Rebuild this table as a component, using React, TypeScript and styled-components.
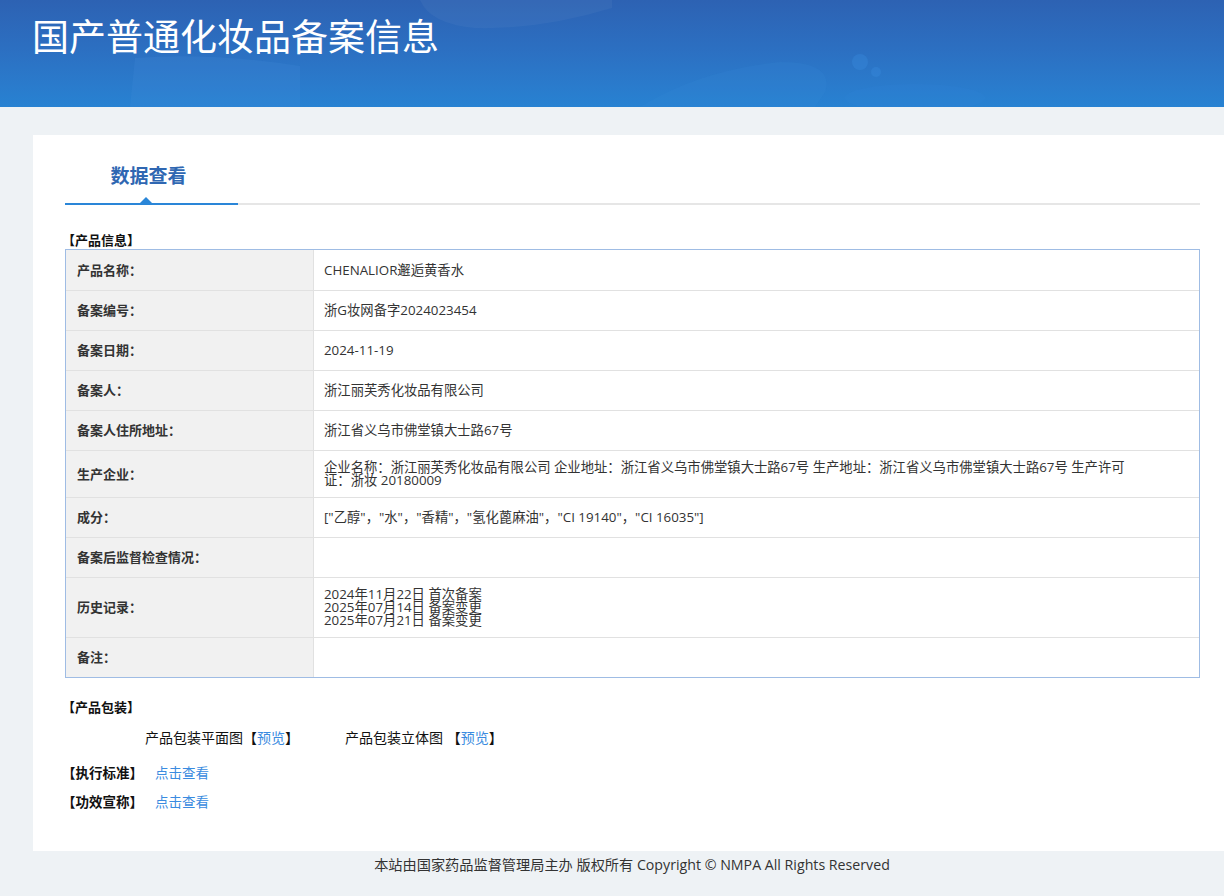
import React from "react";
import styled, { createGlobalStyle } from "styled-components";

const GlobalStyle = createGlobalStyle`
  html, body {
    margin: 0;
    padding: 0;
    background: #eef2f5;
    font-family: "Open Sans", "Noto Sans CJK SC", sans-serif;
    color: #333;
  }
  * { box-sizing: border-box; }
`;

const Header = styled.header`
  position: relative;
  height: 107px;
  overflow: hidden;
  background: linear-gradient(180deg, #2d62b3 0%, #2c6fc1 45%, #2a7bcc 80%, #2782d2 100%);
`;

const HeaderArt = styled.svg`
  position: absolute;
  inset: 0;
  width: 100%;
  height: 100%;
  pointer-events: none;
`;

const Title = styled.h1`
  position: relative;
  margin: 0;
  padding: 13px 0 0 32px;
  font-family: "Noto Sans CJK SC", sans-serif;
  font-size: 37px;
  line-height: 44px;
  font-weight: 400;
  color: #ffffff;
`;

const Main = styled.main`
  padding: 28px 0 0 33px;
`;

const Panel = styled.section`
  background: #ffffff;
  min-height: 716px;
  padding: 0 24px 30px 32px;
`;

const TabBar = styled.div`
  display: flex;
  border-bottom: 2px solid #e6e6e6;
`;

const Tab = styled.div`
  position: relative;
  width: 173px;
  height: 70px;
  padding: 27px 6px 0 0;
  text-align: center;
  font-family: "Noto Sans CJK SC", sans-serif;
  font-size: 19px;
  line-height: 26px;
  font-weight: 700;
  color: #2f67b2;
  border-bottom: 2px solid #2a86d8;
  margin-bottom: -2px;
  &::after {
    content: "";
    position: absolute;
    left: 75px;
    bottom: 0;
    border-left: 6px solid transparent;
    border-right: 6px solid transparent;
    border-bottom: 6px solid #2a86d8;
  }
`;

const SectionTitle = styled.div<{ $top?: number }>`
  margin-top: ${(p) => p.$top ?? 0}px;
  font-size: 13px;
  line-height: 16px;
  font-weight: 700;
  color: #111;
  margin-left: -3px;
`;

const InfoTable = styled.div`
  margin-top: 1px;
  border: 1px solid #9fbce4;
`;

const Row = styled.div`
  display: grid;
  grid-template-columns: 248px 1fr;
  border-bottom: 1px solid #e1e1e1;
  &:first-child > div {
    min-height: 40px;
  }
  &:last-child {
    border-bottom: none;
  }
`;

const LabelCell = styled.div`
  display: flex;
  align-items: center;
  min-height: 39px;
  padding: 10px 11px;
  background: #f1f1f1;
  border-right: 1px solid #e1e1e1;
  font-size: 13px;
  line-height: 13px;
  font-weight: 700;
  color: #333;
`;

const ValueCell = styled.div`
  display: flex;
  align-items: center;
  min-height: 39px;
  padding: 10px 10px;
  font-size: 13.33px;
  line-height: 13px;
  color: #333;
`;

const ValueText = styled.div``;

const PackRow = styled.div`
  display: flex;
  margin-top: 15px;
  padding-left: 80px;
  font-size: 14px;
  line-height: 16px;
  color: #111;
`;

const PackItem = styled.div<{ $width?: number }>`
  width: ${(p) => p.$width ?? 200}px;
`;

const Link = styled.a`
  color: #3a8be0;
  text-decoration: none;
  cursor: pointer;
`;

const LinkRow = styled.div<{ $top: number }>`
  display: flex;
  align-items: center;
  gap: 12px;
  margin-top: ${(p) => p.$top}px;
  margin-left: -3px;
  font-size: 13.5px;
  line-height: 16px;
`;

const LinkLabel = styled.span`
  font-weight: 700;
  color: #111;
`;

const Footer = styled.footer`
  height: 45px;
  padding: 6px 0 0 40px;
  text-align: center;
  font-size: 14.2px;
  line-height: 16px;
  color: #333;
`;

const rows: { label: string; value: React.ReactNode }[] = [
  { label: "产品名称：", value: "CHENALIOR邂逅黄香水" },
  { label: "备案编号：", value: "浙G妆网备字2024023454" },
  { label: "备案日期：", value: "2024-11-19" },
  { label: "备案人：", value: "浙江丽芙秀化妆品有限公司" },
  { label: "备案人住所地址：", value: "浙江省义乌市佛堂镇大士路67号" },
  {
    label: "生产企业：",
    value: (
      <>
        企业名称：浙江丽芙秀化妆品有限公司 企业地址：浙江省义乌市佛堂镇大士路67号 生产地址：浙江省义乌市佛堂镇大士路67号 生产许可
        <br />
        证：浙妆 20180009
      </>
    ),
  },
  {
    label: "成分：",
    value: '["乙醇"，"水"，"香精"，"氢化蓖麻油"，"CI 19140"，"CI 16035"]',
  },
  { label: "备案后监督检查情况：", value: "" },
  {
    label: "历史记录：",
    value: (
      <>
        2024年11月22日 首次备案
        <br />
        2025年07月14日 备案变更
        <br />
        2025年07月21日 备案变更
      </>
    ),
  },
  { label: "备注：", value: "" },
];

export default function App() {
  return (
    <>
      <GlobalStyle />
      <Header>
        <HeaderArt viewBox="0 0 1224 107" preserveAspectRatio="none">
          <path d="M130 107 L135 58 Q210 52 300 66 L300 107 Z" fill="#4a8ee0" opacity="0.18" />
          <path d="M420 0 L612 0 L612 8 Q540 30 475 28 Q430 24 420 0 Z" fill="#ffffff" opacity="0.04" />
          <path d="M640 107 Q700 70 780 62 Q835 62 825 92 L815 107 Z" fill="#3a88d8" opacity="0.18" />
          <circle cx="860" cy="62" r="8" fill="#3a8ce0" opacity="0.35" />
          <circle cx="876" cy="72" r="5" fill="#3a8ce0" opacity="0.35" />
          <ellipse cx="915" cy="98" rx="70" ry="14" fill="#3a8ce0" opacity="0.1" />
        </HeaderArt>
        <Title>国产普通化妆品备案信息</Title>
      </Header>
      <Main>
        <Panel>
          <TabBar>
            <Tab>数据查看</Tab>
          </TabBar>
          <SectionTitle $top={27}>【产品信息】</SectionTitle>
          <InfoTable>
            {rows.map((r) => (
              <Row key={r.label}>
                <LabelCell>{r.label}</LabelCell>
                <ValueCell>
                  <ValueText>{r.value}</ValueText>
                </ValueCell>
              </Row>
            ))}
          </InfoTable>
          <SectionTitle $top={21}>【产品包装】</SectionTitle>
          <PackRow>
            <PackItem $width={200}>
              产品包装平面图【<Link>预览</Link>】
            </PackItem>
            <PackItem $width={200}>
              产品包装立体图 【<Link>预览</Link>】
            </PackItem>
          </PackRow>
          <LinkRow $top={19}>
            <LinkLabel>【执行标准】</LinkLabel>
            <Link>点击查看</Link>
          </LinkRow>
          <LinkRow $top={13}>
            <LinkLabel>【功效宣称】</LinkLabel>
            <Link>点击查看</Link>
          </LinkRow>
        </Panel>
      </Main>
      <Footer>本站由国家药品监督管理局主办 版权所有 Copyright © NMPA All Rights Reserved</Footer>
    </>
  );
}
